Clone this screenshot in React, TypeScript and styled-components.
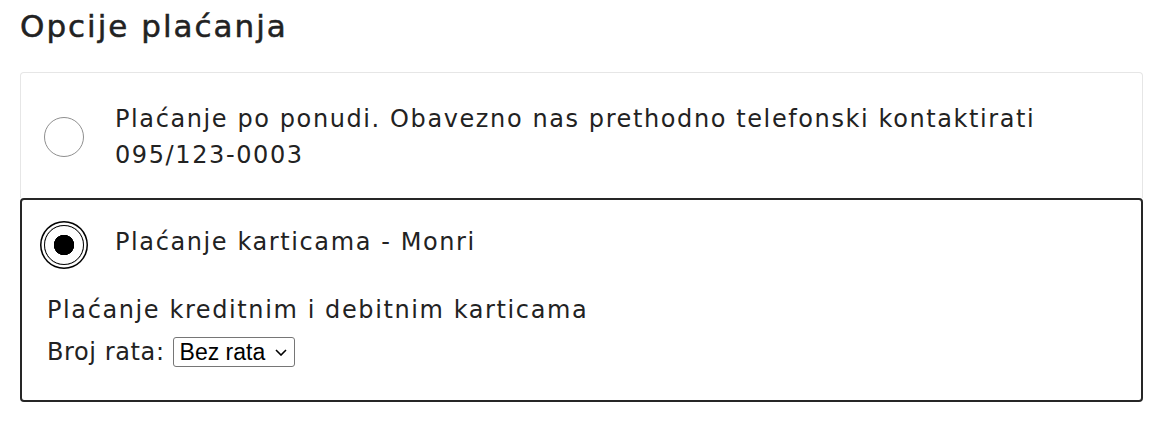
import React, { useState } from 'react';
import styled, { createGlobalStyle } from 'styled-components';

const GlobalStyle = createGlobalStyle`
  body {
    margin: 0;
    background: #fff;
    font-family: "DejaVu Sans", "Open Sans", sans-serif;
    color: #222;
  }
`;

const Page = styled.div`
  padding: 6px 20px 0 20px;
  width: 1123px;
`;

const Title = styled.h2`
  margin: 0 0 26px 0;
  font-size: 31px;
  font-weight: 400;
  letter-spacing: 2px;
  line-height: 40px;
  color: #222;
  -webkit-text-stroke: 0.5px #222;
`;

const OptionList = styled.div`
  display: flex;
  flex-direction: column;
`;

const Option = styled.div<{ $active: boolean }>`
  border: ${p => (p.$active ? '2px solid #262626' : '1px solid #e6e6e6')};
  border-bottom-width: ${p => (p.$active ? '2px' : '0')};
  border-radius: ${p => (p.$active ? '4px' : '4px 4px 0 0')};
  padding: ${p => (p.$active ? '22px 24px 30px 22px' : '28px 24px 25px 23px')};
`;

const OptionHead = styled.label`
  display: flex;
  align-items: center;
  gap: 31px;
  cursor: pointer;
`;

const Radio = styled.input.attrs({ type: 'radio' })`
  appearance: none;
  flex: none;
  margin: 0;
  width: 40px;
  height: 40px;
  border-radius: 50%;
  border: 1px solid #8f8f8f;
  background: #fff;
  cursor: pointer;

  &:checked {
    border: 1.5px solid #000;
    background: radial-gradient(circle, #000 0 10px, #fff 10.5px);
    box-shadow: 0 0 0 2.5px #fff, 0 0 0 4px #000;
    position: relative;
    top: 3px;
  }
`;

const OptionLabel = styled.span`
  font-size: 24px;
  letter-spacing: 1.6px;
  line-height: 36px;
  color: #222;
`;

const Details = styled.div`
  margin-top: 30px;
  padding-left: 3px;
  font-size: 24px;
  letter-spacing: 1.6px;
  line-height: 36px;
  color: #222;
`;

const SelectRow = styled.div`
  display: flex;
  align-items: center;
  gap: 8px;
  margin-top: 6px;
`;

const SelectLabel = styled.span`
  letter-spacing: 0.6px;
`;

const SelectWrap = styled.span`
  position: relative;
  display: inline-flex;
`;

const Select = styled.select`
  appearance: none;
  width: 122px;
  height: 30px;
  padding: 0 24px 0 6px;
  border: 1px solid #767676;
  border-radius: 3px;
  background: #fff;
  font-family: "Liberation Sans", Arial, sans-serif;
  font-size: 23px;
  letter-spacing: 0;
  color: #000;
`;

const Chevron = styled.svg`
  position: absolute;
  right: 8px;
  top: 12px;
  pointer-events: none;
`;

export default function App() {
  const [method, setMethod] = useState('monri');

  return (
    <>
      <GlobalStyle />
      <Page>
        <Title>Opcije plaćanja</Title>
        <OptionList>
          <Option $active={method === 'ponuda'}>
            <OptionHead>
              <Radio name="payment" checked={method === 'ponuda'} onChange={() => setMethod('ponuda')} />
              <OptionLabel>
                Plaćanje po ponudi. Obavezno nas prethodno telefonski kontaktirati 095/123-0003
              </OptionLabel>
            </OptionHead>
          </Option>
          <Option $active={method === 'monri'}>
            <OptionHead>
              <Radio name="payment" checked={method === 'monri'} onChange={() => setMethod('monri')} />
              <OptionLabel>Plaćanje karticama - Monri</OptionLabel>
            </OptionHead>
            {method === 'monri' && (
              <Details>
                <div>Plaćanje kreditnim i debitnim karticama</div>
                <SelectRow>
                  <SelectLabel>Broj rata:</SelectLabel>
                  <SelectWrap>
                    <Select defaultValue="0">
                      <option value="0">Bez rata</option>
                      <option value="2">2 rate</option>
                      <option value="3">3 rate</option>
                    </Select>
                    <Chevron width="12" height="7" viewBox="0 0 12 7">
                      <path d="M1 1l5 5 5-5" fill="none" stroke="#000" strokeWidth="1.6" />
                    </Chevron>
                  </SelectWrap>
                </SelectRow>
              </Details>
            )}
          </Option>
        </OptionList>
      </Page>
    </>
  );
}
